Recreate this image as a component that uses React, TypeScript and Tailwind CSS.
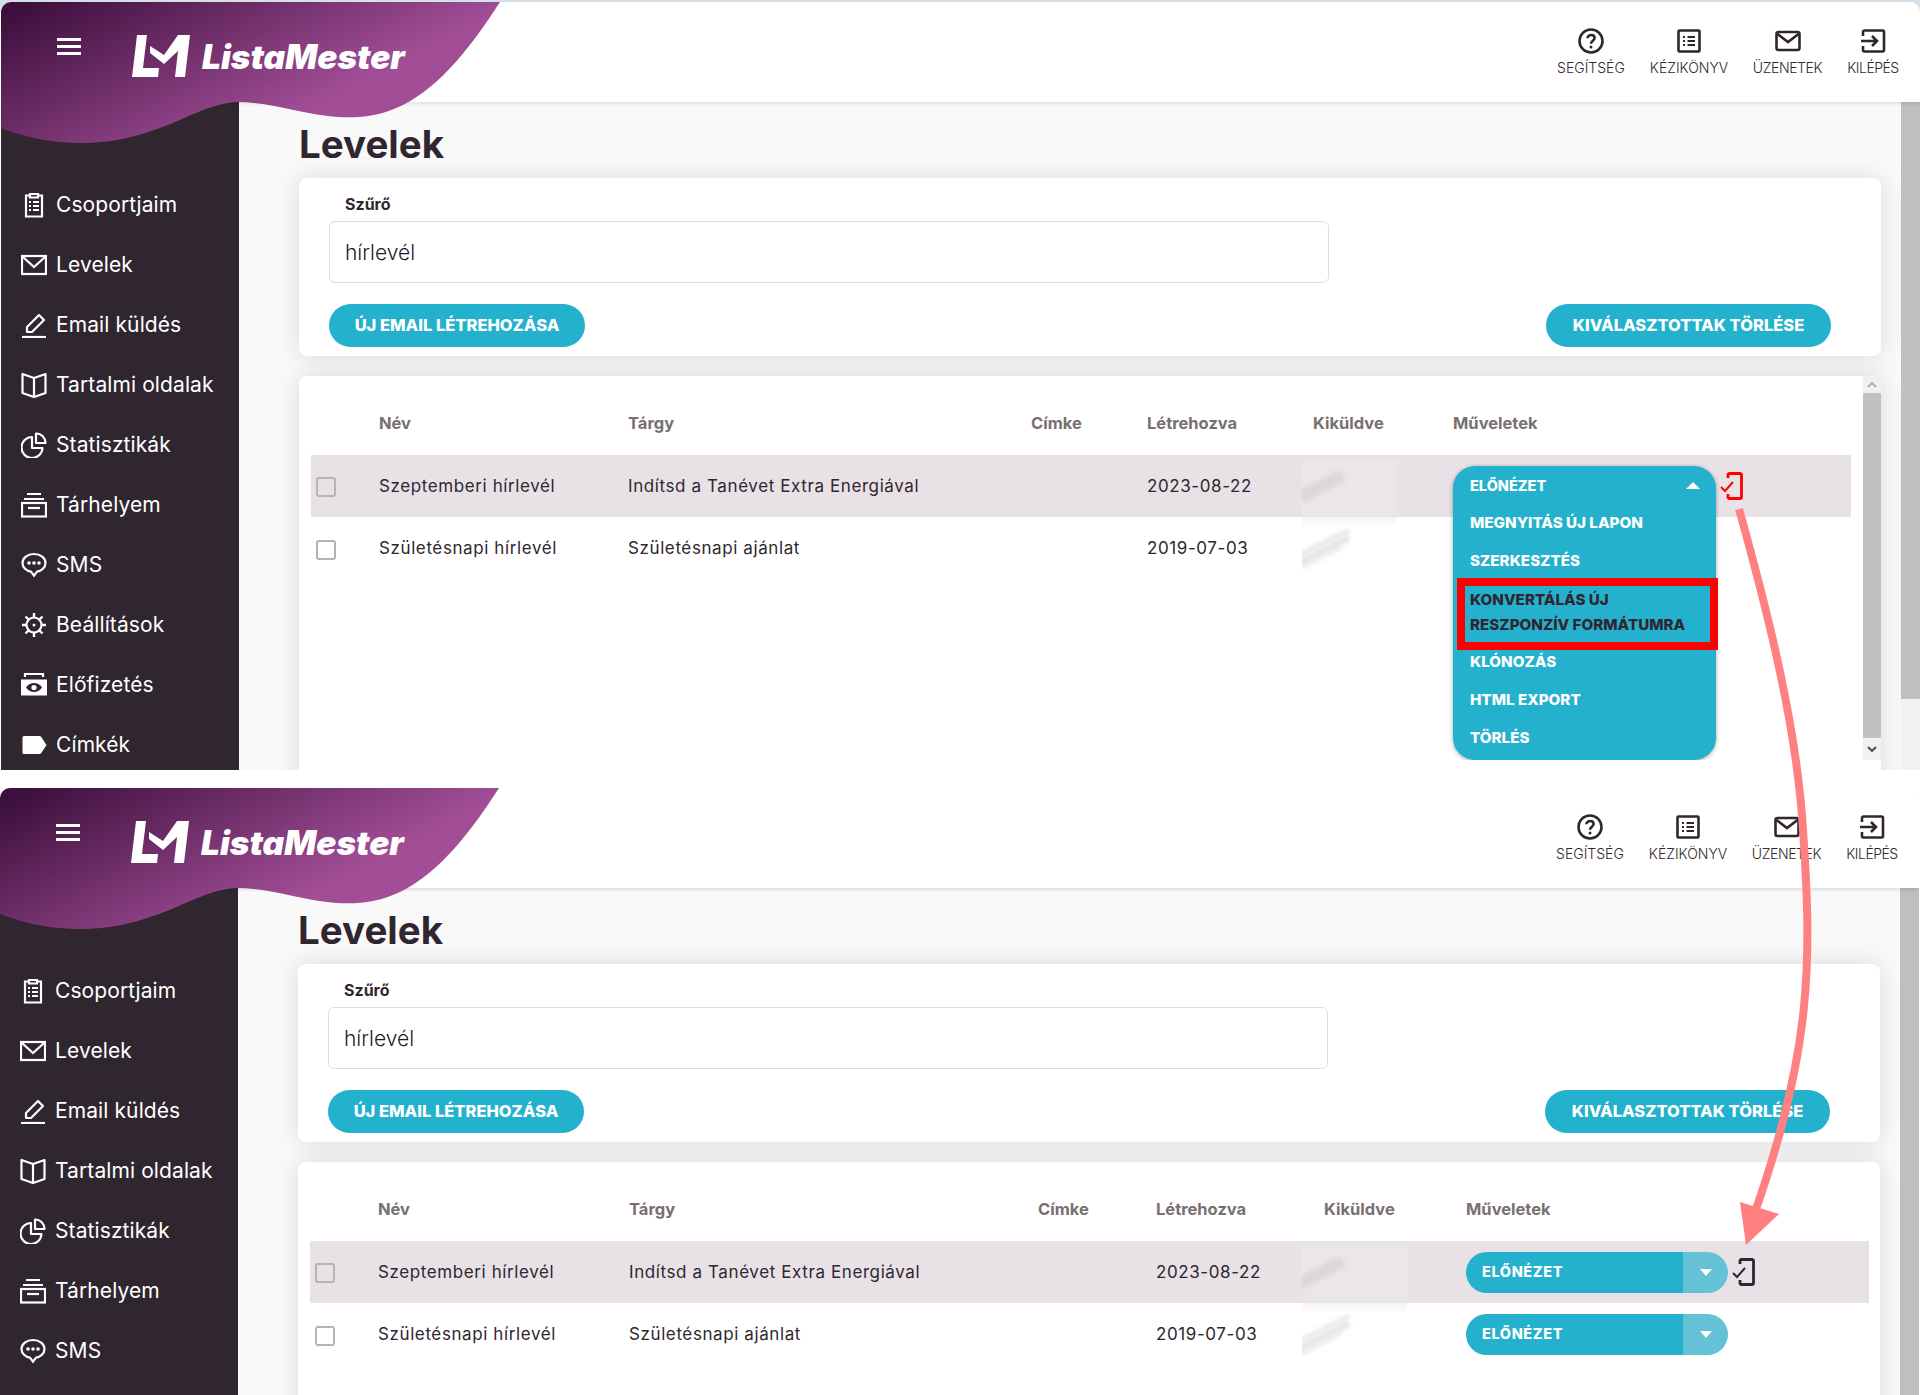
import React from "react";

const navItems = [
  { label: "Csoportjaim", icon: "clipboard" },
  { label: "Levelek", icon: "mail" },
  { label: "Email küldés", icon: "pen" },
  { label: "Tartalmi oldalak", icon: "book" },
  { label: "Statisztikák", icon: "pie" },
  { label: "Tárhelyem", icon: "archive" },
  { label: "SMS", icon: "chat" },
  { label: "Beállítások", icon: "gear" },
  { label: "Előfizetés", icon: "money" },
  { label: "Címkék", icon: "tag" },
];

const topLinks = [
  { icon: "help", label: "SEGÍTSÉG", cls: "w-[68px] flex flex-col items-center gap-[4px] whitespace-nowrap" },
  { icon: "list", label: "KÉZIKÖNYV", cls: "w-[78px] flex flex-col items-center gap-[4px] whitespace-nowrap" },
  { icon: "mail", label: "ÜZENETEK", cls: "w-[69px] flex flex-col items-center gap-[4px] whitespace-nowrap tracking-[-0.4px]" },
  { icon: "exit", label: "KILÉPÉS", cls: "w-[52px] flex flex-col items-center gap-[4px] whitespace-nowrap tracking-[-0.5px]" },
];

const menuItems = ["MEGNYITÁS ÚJ LAPON", "SZERKESZTÉS"];
const menuItemsAfter = ["KLÓNOZÁS", "HTML EXPORT", "TÖRLÉS"];

function NavIcon({ name }: { name: string }) {
  const base = {
    width: 26,
    height: 26,
    viewBox: "0 0 26 26",
    fill: "none",
    stroke: "#fff",
    strokeWidth: 2.2,
  };
  switch (name) {
    case "clipboard":
      return (
        <svg {...base}>
          <path d="M9 3.500H5v21h16v-21h-4" />
          <path d="M9 5.500V2h8v3.500z" fill="#302630" />
          <path d="M8 10h2M8 14h2M8 18h2M12 10h6M12 14h6M12 18h6" strokeWidth="2" />
        </svg>
      );
    case "mail":
      return (
        <svg {...base}>
          <rect x="1" y="4" width="24" height="18" />
          <path d="M2 5l11 10L24 5" />
        </svg>
      );
    case "pen":
      return (
        <svg {...base}>
          <path d="M1 25h24" />
          <path d="M6 20v-5L18 3l5 5-12 12z" strokeLinejoin="round" />
        </svg>
      );
    case "book":
      return (
        <svg {...base}>
          <path d="M13 6L1.500 2v19l11.500 4 11.500-4V2z" strokeLinejoin="round" />
          <path d="M13 6v19" />
        </svg>
      );
    case "pie":
      return (
        <svg {...base}>
          <path d="M11 5a10.500 10.500 0 1 0 10.500 11H11z" strokeLinejoin="round" />
          <path d="M15 1.500a9.500 9.500 0 0 1 9.500 9.500H15z" strokeLinejoin="round" />
        </svg>
      );
    case "archive":
      return (
        <svg {...base}>
          <path d="M6 2h14M3 7h20" />
          <rect x="1" y="11" width="24" height="13.500" />
          <path d="M7 16h12" />
        </svg>
      );
    case "chat":
      return (
        <svg {...base}>
          <path d="M13 2C6.500 2 1.500 5.800 1.500 11c0 4.500 4 8 8.500 8.700l3 4 3-4c4.500-.7 8.500-4.200 8.500-8.700C24.500 5.800 19.500 2 13 2z" />
          <circle cx="8" cy="11" r="1.800" fill="#fff" stroke="none" />
          <circle cx="13" cy="11" r="1.800" fill="#fff" stroke="none" />
          <circle cx="18" cy="11" r="1.800" fill="#fff" stroke="none" />
        </svg>
      );
    case "gear":
      return (
        <svg {...base}>
          <circle cx="13" cy="13" r="7.500" />
          <circle cx="13" cy="13" r="1.500" fill="#fff" stroke="none" />
          <path d="M13 1v4M13 21v4M1 13h4M21 13h4M4.500 4.500l3 3M18.500 18.500l3 3M21.500 4.500l-3 3M7.500 18.500l-3 3" strokeWidth="2.400" />
        </svg>
      );
    case "money":
      return (
        <svg {...base}>
          <path d="M4 5V2h18v3" />
          <path d="M0 7.500h26v16H0z" fill="#fff" stroke="none" />
          <path d="M5 15.500c2.500-3.400 5-4.500 8-4.500s5.500 1.100 8 4.500c-2.500 3.400-5 4.500-8 4.500s-5.500-1.100-8-4.500z" fill="#302630" stroke="none" />
          <circle cx="13" cy="15.500" r="2.600" fill="#fff" stroke="none" />
        </svg>
      );
    default:
      return (
        <svg {...base}>
          <path d="M3 4h15.500a2 2 0 0 1 1.600.8L25.500 13l-5.400 8.200a2 2 0 0 1-1.600.8H3a1.500 1.500 0 0 1-1.500-1.500v-15A1.500 1.500 0 0 1 3 4z" fill="#fff" stroke="none" />
        </svg>
      );
  }
}

function TopIcon({ name }: { name: string }) {
  const base = {
    width: 26,
    height: 26,
    viewBox: "0 0 26 26",
    fill: "none",
    stroke: "#302630",
    strokeWidth: 2.6,
  };
  if (name === "help")
    return (
      <svg {...base}>
        <circle cx="13" cy="13" r="11.500" />
        <path d="M9.500 10.300c0-2 1.600-3.300 3.600-3.300s3.500 1.300 3.500 3.100c0 2.600-3.600 2.800-3.600 5.600" />
        <circle cx="13" cy="19" r="1.500" fill="#302630" stroke="none" />
      </svg>
    );
  if (name === "list")
    return (
      <svg {...base}>
        <rect x="2.500" y="2.500" width="21" height="21" rx="1" />
        <path d="M7 9h2M7 13h2M7 17h2M11.500 9H19M11.500 13H19M11.500 17H19" strokeWidth="2.200" />
      </svg>
    );
  if (name === "mail")
    return (
      <svg {...base}>
        <rect x="1.500" y="4" width="23" height="18" rx="2" />
        <path d="M2.500 6L13 14 23.500 6" />
      </svg>
    );
  return (
    <svg {...base}>
      <path d="M3 8V4a1.500 1.500 0 0 1 1.500-1.500h18A1.500 1.500 0 0 1 24 4v18a1.500 1.500 0 0 1-1.500 1.500h-18A1.500 1.500 0 0 1 3 22v-4" />
      <path d="M1 13h15M12 8l5 5-5 5" />
    </svg>
  );
}

function PhoneCheck({ color }: { color: string }) {
  return (
    <svg width="23" height="28" viewBox="0 0 23 28" fill="none" stroke={color} className="shrink-0">
      <path
        d="M8 6V2.500A1.500 1.500 0 0 1 9.500 1.500h11A1.500 1.500 0 0 1 21.500 2.500v23a1.500 1.500 0 0 1-1.500 1h-10.500A1.500 1.500 0 0 1 8 25.500V22"
        strokeWidth="2.800"
      />
      <path d="M1 15l4 4 8-9" strokeWidth="2" />
    </svg>
  );
}

function Logo() {
  return (
    <svg width="60" height="43" viewBox="0 0 60 43" fill="#fff">
      <path d="M5 0h10l-4 33h16l-1 9H0z" />
      <path d="M18 11l14 9L46 0h12l-5 42h-10l3-26-14 13-14-11z" />
    </svg>
  );
}

// blurred-out value of the "Kiküldve" column
function Smudge({ strong, first }: { strong: boolean; first: boolean }) {
  const offset = first ? "relative h-[62px] w-[95px] -ml-[11px]" : "relative h-[62px] w-[105px] -ml-[22px]";
  return (
    <div className={offset}>
      {strong ? (
        <div className="absolute top-[6px] left-0 w-full h-[66px] bg-gradient-to-b from-[#ebe6ea] from-70% to-transparent" />
      ) : null}
      <div className="absolute inset-0 overflow-hidden">
        {strong ? (
          <div className="absolute top-[25px] -left-[6px] w-[50px] h-[13px] -rotate-[27deg] rounded-sm bg-[#dcd7db] blur-[2px]" />
        ) : (
          <>
            <div className="absolute top-[24px] -left-[6px] w-[56px] h-[4px] -rotate-[27deg] bg-[#e2e2e2] blur-[2px]" />
            <div className="absolute top-[31px] -left-[6px] w-[56px] h-[5px] -rotate-[27deg] bg-[#dedede] blur-[2px]" />
            <div className="absolute top-[38px] -left-[4px] w-[46px] h-[4px] -rotate-[27deg] bg-[#e8e8e8] blur-[2px]" />
          </>
        )}
      </div>
    </div>
  );
}

function DropButton() {
  return (
    <div className="flex h-[41px] w-[262px] rounded-full overflow-hidden text-white">
      <div className="flex-1 bg-[#24b1cd] flex items-center pl-[16px] text-[14.5px] font-extrabold">ELŐNÉZET</div>
      <div className="w-[45px] bg-[#64c1d6] flex items-center justify-center">
        <div className="w-0 h-0 border-x-[6px] border-x-transparent border-t-[7px] border-t-white" />
      </div>
    </div>
  );
}

function OpenMenu() {
  return (
    <div className="relative w-[263px] h-[62px]">
      <div className="absolute top-[11px] left-0 w-[263px] z-10 rounded-[22px] bg-[#24b1cd] shadow-[0_1px_4px_rgba(0,0,0,0.35)] pl-[17px] pb-[3px] text-[15.2px] font-extrabold text-white tracking-normal">
        <div className="h-[38px] flex items-center justify-between pr-[16px] pt-[1px] text-[14.5px]">
          <span>ELŐNÉZET</span>
          <span className="w-0 h-0 border-x-[7px] border-x-transparent border-b-[7px] border-b-white" />
        </div>
        {menuItems.map((item) => (
          <div key={item} className="h-[38px] flex items-center">
            {item}
          </div>
        ))}
        <div className="h-[63px] flex items-center leading-[25px] text-[#302630]">
          KONVERTÁLÁS ÚJ
          <br />
          RESZPONZÍV FORMÁTUMRA
        </div>
        {menuItemsAfter.map((item) => (
          <div key={item} className="h-[38px] flex items-center">
            {item}
          </div>
        ))}
        <div className="absolute top-[112px] left-[4px] w-[261px] h-[72px] border-[8px] border-[#ff0000]" />
      </div>
    </div>
  );
}

function Screen({ first }: { first: boolean }) {
  const cols = first
    ? "grid grid-cols-[68px_249px_403px_116px_166px_140px_1fr]"
    : "grid grid-cols-[68px_251px_409px_118px_168px_142px_1fr]";
  const rows = [
    { name: "Szeptemberi hírlevél", subject: "Indítsd a Tanévet Extra Energiával", date: "2023-08-22" },
    { name: "Születésnapi hírlevél", subject: "Születésnapi ajánlat", date: "2019-07-03" },
  ];
  const gradId = first ? "wave1" : "wave2";

  return (
    <div
      className={
        first
          ? "relative ml-px w-[1919px] h-[768px] mt-[2px] overflow-hidden rounded-t-[10px] bg-[#f9f9f9] flex flex-col"
          : "relative w-[1919px] h-[607px] mt-[18px] overflow-hidden rounded-t-[10px] bg-[#f9f9f9] flex flex-col"
      }
    >
      <header className="relative z-20 h-[100px] shrink-0 bg-white shadow-[0_1px_4px_rgba(0,0,0,0.15)] flex justify-end gap-[25px] pr-[21px] pt-[26px] text-[14px] font-light text-[#302630]">
        {topLinks.map((link) => (
          <div key={link.label} className={link.cls}>
            <TopIcon name={link.icon} />
            <span className="leading-[20px]">{link.label}</span>
          </div>
        ))}
      </header>

      {/* wave + logo lies over the header and the sidebar */}
      <div className="absolute top-0 left-0 z-30 w-[500px] h-[146px]">
        <svg width="500" height="146" viewBox="0 0 500 146" className="absolute inset-0">
          <defs>
            <linearGradient id={gradId} x1="0" y1="0" x2="1" y2="0.55">
              <stop offset="0.04" stopColor="#3c0f3c" />
              <stop offset="0.8" stopColor="#a24e97" />
            </linearGradient>
          </defs>
          <path
            d="M0 0H499C472 42 440 84 402 103C378 115 358 116 336 115C300 112 270 100 236 100C195 102 160 138 88 141C55 142 25 136 0 126Z"
            fill={`url(#${gradId})`}
          />
        </svg>
        <div className="absolute top-[36px] left-[56px] w-[24px] flex flex-col gap-[4px]">
          <div className="h-[3px] bg-white" />
          <div className="h-[3px] bg-white" />
          <div className="h-[3px] bg-white" />
        </div>
        <div className="absolute top-[33px] left-[131px] flex items-center gap-[10px]">
          <Logo />
          <span className="text-[33.5px] leading-[40px] italic font-black text-white">ListaMester</span>
        </div>
      </div>

      <div className="flex flex-1 min-h-0">
        <aside className="w-[238px] shrink-0 bg-[#302630] pt-[73px] text-white text-[21px] tracking-[0.1px]">
          {(first ? navItems : navItems.slice(0, 7)).map((item) => (
            <div key={item.label} className="h-[60px] flex items-center pl-[20px] gap-[9px]">
              <NavIcon name={item.icon} />
              <span>{item.label}</span>
            </div>
          ))}
        </aside>

        <main className="flex-1 min-w-0 flex">
          <div className="flex-1 min-w-0 pl-[60px] pr-[20px]">
            <h1 className="pt-[18px] pb-[10px] leading-[48px] text-[38.5px] font-bold text-[#302630]">Levelek</h1>

            <section className="h-[178px] bg-white rounded-lg shadow-[0_0_24px_rgba(0,0,0,0.13)] pt-[11px] pl-[30px] pr-[50px]">
              <label className="block pl-[16px] mb-[2px] text-[16px] font-bold leading-[30px] text-[#302630]">Szűrő</label>
              <div className="w-[1000px] h-[62px] border border-[#dedede] rounded-md flex items-center pl-[15px] pt-[2px] text-[21px] font-light text-[#1f181f]">
                hírlevél
              </div>
              <div className="flex justify-between mt-[21px]">
                <button className="h-[43px] w-[256px] rounded-full bg-[#24b1cd] text-white text-[16.5px] font-extrabold">
                  ÚJ EMAIL LÉTREHOZÁSA
                </button>
                <button className="h-[43px] w-[285px] rounded-full bg-[#24b1cd] text-white text-[16.5px] font-extrabold">
                  KIVÁLASZTOTTAK TÖRLÉSE
                </button>
              </div>
            </section>

            <section className="mt-[20px] bg-white rounded-t-lg shadow-[0_0_24px_rgba(0,0,0,0.13)] h-[500px]">
              <div className={first ? "flex h-[384px] overflow-hidden" : "flex"}>
                <div className={first ? "flex-1 pl-[12px] pr-[12px]" : "flex-1 pl-[12px] pr-[11px]"}>
                  <div className={`${cols} h-[79px] items-center pt-[16px] text-[16.5px] font-bold text-[#787070]`}>
                    <span />
                    <span>Név</span>
                    <span>Tárgy</span>
                    <span>Címke</span>
                    <span>Létrehozva</span>
                    <span>Kiküldve</span>
                    <span>Műveletek</span>
                  </div>
                  {rows.map((row, i) => (
                    <div
                      key={row.name}
                      className={`${cols} h-[62px] items-center text-[17px] tracking-[0.6px] text-[#302630] ${i === 0 ? "bg-[#e8e2e7]" : ""}`}
                    >
                      <div className={i === 0 ? "pl-[5px] pt-[1px]" : "pl-[5px] pt-[3px]"}>
                        <div className="w-[20px] h-[20px] rounded-[3px] border-2 border-[#b4b4b4] bg-transparent" />
                      </div>
                      <span className="pt-[2px]">{row.name}</span>
                      <span className="pt-[2px]">{row.subject}</span>
                      <span />
                      <span className="pt-[2px]">{row.date}</span>
                      <Smudge strong={i === 0} first={first} />
                      <div className="flex items-center gap-[4px]">
                        {first ? i === 0 ? <OpenMenu /> : null : <DropButton />}
                        {i === 0 ? <PhoneCheck color={first ? "#ff0000" : "#302630"} /> : null}
                      </div>
                    </div>
                  ))}
                </div>
                {first ? (
                  <div className="w-[18px] shrink-0 bg-[#f1f1f1] flex flex-col text-[#505050]">
                    <div className="h-[17px] flex items-center justify-center">
                      <svg width="10" height="6" viewBox="0 0 10 6" fill="none" stroke="#b0b0b0" strokeWidth="2">
                        <path d="M1 5l4-4 4 4" />
                      </svg>
                    </div>
                    <div className="flex-1 bg-[#c1c1c1]" />
                    <div className="h-[22px] flex items-center justify-center">
                      <svg width="10" height="6" viewBox="0 0 10 6" fill="none" stroke="#505050" strokeWidth="2">
                        <path d="M1 1l4 4 4-4" />
                      </svg>
                    </div>
                  </div>
                ) : null}
              </div>
            </section>
          </div>

          <div className="w-[19px] shrink-0 bg-[#f1f1f1]">
            <div className="h-[597px] bg-[#bfbfbf]" />
          </div>
        </main>
      </div>
    </div>
  );
}

export default function App() {
  return (
    <div className="relative w-[1920px] h-[1395px] overflow-hidden bg-white font-['Inter',sans-serif]">
      <div className="absolute top-0 left-0 w-full h-[12px] bg-[#d5e0e8]" />
      <div className="relative">
        <Screen first />
        <Screen first={false} />
      </div>
      {/* annotation arrow drawn over both screenshots */}
      <svg
        className="absolute inset-0 z-50 pointer-events-none"
        width="1920"
        height="1395"
        viewBox="0 0 1920 1395"
      >
        <path
          d="M1739 509C1770 620 1797 730 1803 830C1812 960 1812 1050 1755 1212"
          fill="none"
          stroke="#ff8080"
          strokeWidth="8"
        />
        <path d="M1740 1202L1779 1214L1746 1245Z" fill="#ff8080" />
      </svg>
    </div>
  );
}
